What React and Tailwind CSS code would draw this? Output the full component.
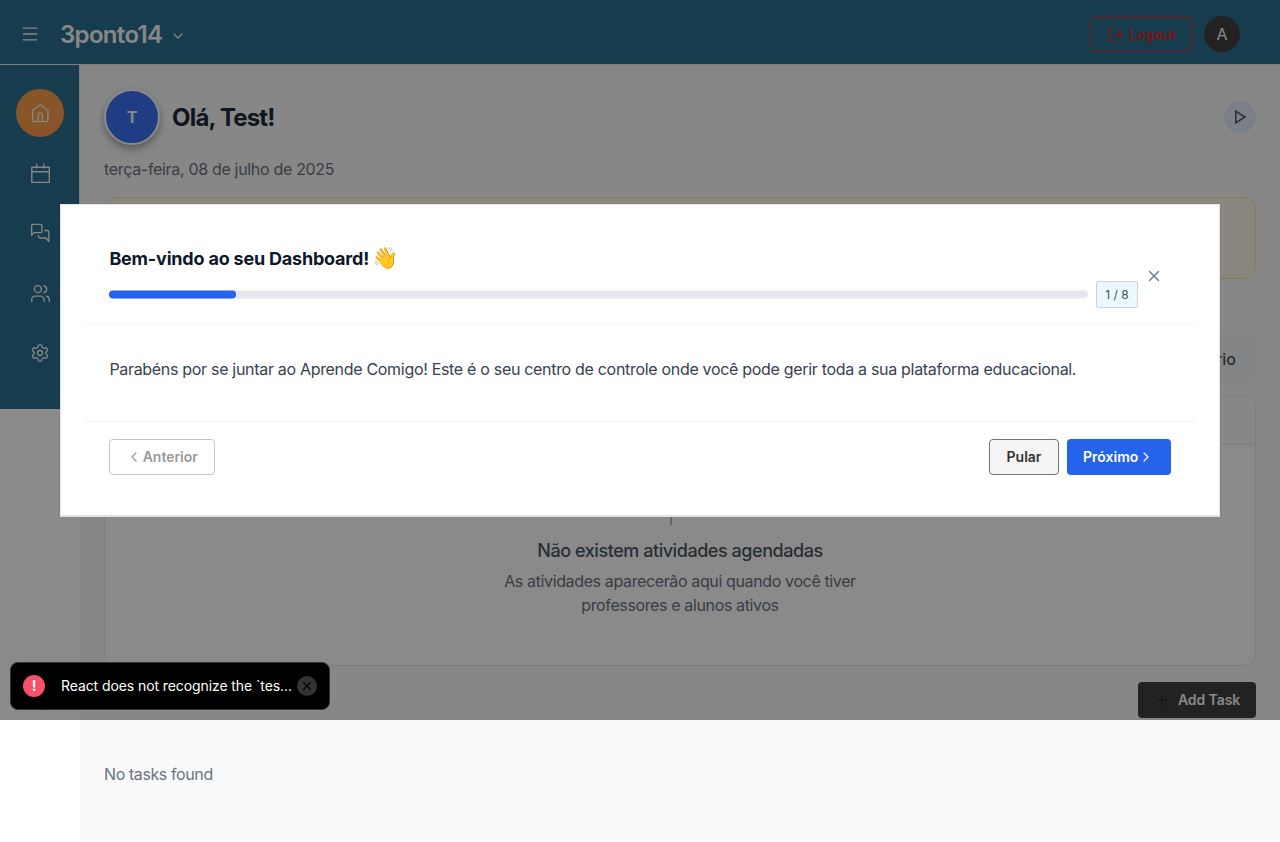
import React from 'react';
import { Users, Settings, Menu, ChevronDown, ChevronLeft, ChevronRight, LogOut, Plus, X } from 'lucide-react';

function HomeIcon() {
  return (
    <svg width="24" height="24" viewBox="0 0 24 24" fill="none" stroke="currentColor" strokeWidth="1.4">
      <path d="M4.6 9.2 12.2 3.7l7.7 5.5v9.8a1.6 1.6 0 0 1-1.6 1.6H6.2A1.6 1.6 0 0 1 4.6 19z" strokeLinejoin="round" />
      <path d="M10.2 20.4v-6.6a1.5 1.5 0 0 1 1.5-1.5h1.1a1.5 1.5 0 0 1 1.5 1.5v6.6" />
    </svg>
  );
}

function CalendarIcon() {
  return (
    <svg width="24" height="24" viewBox="0 0 24 24" fill="none" stroke="currentColor" strokeWidth="1.4">
      <path d="M3.8 6.2h17.5v15.2H3.8zM3.8 10.7h17.5M8.7 2.8v4.6M15.7 2.8v4.6" strokeLinejoin="round" />
    </svg>
  );
}

function MessagesIcon() {
  return (
    <svg width="24" height="24" viewBox="0 0 24 24" fill="none" stroke="currentColor" strokeWidth="1.4" strokeLinejoin="round">
      <path d="M3.6 14.2V4.8a1.4 1.4 0 0 1 1.4-1.4h7.6A1.4 1.4 0 0 1 14 4.8v5.4a1.4 1.4 0 0 1-1.4 1.4H6.2z" />
      <path d="M16.3 9.5h3.1a1.4 1.4 0 0 1 1.4 1.4v9.6l-2.9-3.5h-6a1.4 1.4 0 0 1-1.4-1.4v-1.5" />
    </svg>
  );
}

function Header() {
  return (
    <header className="flex h-[65px] shrink-0 items-center border-b border-[#e6e6e6] bg-[#2c6f90] pr-10 pl-5 pt-1">
      <Menu className="text-[#fafafa]" size={20} strokeWidth={1.6} />
      <h1 className="ml-5 pt-0.5 text-2xl font-semibold tracking-[-0.67px] text-[#fafafa]">3ponto14</h1>
      <ChevronDown className="ml-2 mt-[3px] text-[#fafafa]" size={16} strokeWidth={1.8} />
      <button className="ml-auto flex h-9 w-[101px] items-center justify-center gap-1 rounded border border-[#dc2626] pt-px text-sm font-semibold text-[#dc2626]">
        <LogOut size={17} strokeWidth={1.8} />
        Logout
      </button>
      <div className="ml-3 flex size-9 items-center justify-center rounded-full bg-[#404040] text-base text-[#fafafa]">A</div>
    </header>
  );
}

function Sidebar() {
  return (
    <div className="w-20 shrink-0 bg-white">
      <nav className="flex h-[344px] flex-col items-center gap-3 border-r border-[#e6e6e6] bg-[#2c6f90] pt-6 text-[#f5f5f5]">
        <div className="ml-px flex size-12 items-center justify-center rounded-full bg-[#fb9d4b]"><HomeIcon /></div>
        <div className="ml-px flex size-12 items-center justify-center"><CalendarIcon /></div>
        <div className="ml-px flex size-12 items-center justify-center"><MessagesIcon /></div>
        <div className="ml-px flex size-12 items-center justify-center"><Users size={21} strokeWidth={1.6} /></div>
        <div className="ml-px flex size-12 items-center justify-center"><Settings size={20} strokeWidth={1.6} /></div>
      </nav>
    </div>
  );
}

function Main() {
  return (
    <main className="flex min-w-0 grow flex-col bg-[#f9fafb] px-6 pt-6">
      <div className="flex h-14 items-center">
        <div className="flex size-14 items-center justify-center rounded-full border-2 border-white bg-[#3b71f3] text-base font-bold text-[#f9fafb] shadow-[0_4px_9px_rgba(0,0,0,0.35)]">T</div>
        <h2 className="ml-3 pt-0.5 text-2xl font-bold tracking-[-0.8px] text-[#1f2937]">Olá, Test!</h2>
        <div className="ml-auto flex size-8 items-center justify-center rounded-full bg-[#e3ecfb]">
          <svg width="16" height="16" viewBox="0 0 16 16" fill="none" stroke="#525252" strokeWidth="1.5">
            <path d="M3.8 2.2 13 8l-9.2 5.8z" />
          </svg>
        </div>
      </div>
      <p className="mt-3 h-6 text-base leading-6 tracking-[-0.32px] text-[#6b7280]">terça-feira, 08 de julho de 2025</p>
      <div className="mt-4 h-[82px] rounded-xl border border-[#fde68a] bg-[#fefaeb]" />
      <div className="mt-14 flex h-12 items-center justify-end rounded-xl bg-[#f3f4f6] pr-5 text-base font-medium text-[#4b5563]">Calendário</div>
      <section className="mt-3 flex h-[271px] flex-col rounded-xl border border-[#e5e7eb] bg-white">
        <div className="h-[49px] shrink-0 rounded-t-xl border-b border-[#e5e7eb] bg-[#f9fafb]" />
        <div className="flex flex-col items-center pt-8">
          <svg width="48" height="48" viewBox="0 0 48 48" fill="none" stroke="#b9bdc9" strokeWidth="2">
            <path d="M15 8v40M8 8h32v28H8z" />
          </svg>
          <h3 className="mt-3 text-lg leading-7 font-medium tracking-[-0.45px] text-[#4b5563]">Não existem atividades agendadas</h3>
          <p className="mt-1 w-[384px] text-center text-base leading-6 tracking-[-0.37px] text-[#6b7280]">As atividades aparecerão aqui quando você tiver <br />professores e alunos ativos</p>
        </div>
      </section>
      <button className="mt-4 flex h-9 w-[118px] shrink-0 items-center gap-2 self-end rounded bg-[#404040] pl-4 text-sm font-semibold tracking-[-0.1px] text-[#fafafa]">
        <Plus size={16} strokeWidth={1.6} className="text-[#222]" />
        Add Task
      </button>
      <p className="mt-11 text-base leading-6 tracking-[-0.4px] text-[#6b7280]">No tasks found</p>
    </main>
  );
}

function Tour() {
  return (
    <div className="absolute top-[204px] left-[60px] flex h-[313px] w-[1160.4px] flex-col border border-b-2 border-[#e2e2e2] bg-white px-[23.4px]">
      <div className="flex h-[120px] shrink-0 border-b border-[#f5f5f5] pl-[25px]">
        <div className="w-[1029px] pt-10">
          <h2 className="text-lg leading-[27px] font-bold tracking-[-0.2px] text-[#0f172a]">
            Bem-vindo ao seu Dashboard! <span className="-ml-px text-[21px] leading-[20px]">👋</span>
          </h2>
          <div className="mt-[9px] flex items-center gap-2">
            <div className="h-2 w-[978.5px] translate-y-[0.5px] rounded-full bg-[#e5e7eb]">
              <div className="h-2 w-[127px] rounded-full bg-[#2563eb]" />
            </div>
            <div className="flex h-[26.5px] w-[42px] items-center justify-center rounded-xs border border-[#cbd5e1] bg-[#ebf8ff] pt-0.5 text-xs text-[#414b5a]">1 / 8</div>
          </div>
        </div>
        <X className="mt-[62px] ml-[6.5px] text-[#64748b]" size={18} strokeWidth={1.8} />
      </div>
      <div className="flex h-[97px] shrink-0 items-center border-b border-[#f5f5f5] px-[25px] pb-2 text-base tracking-[-0.31px] text-[#374151]">
        Parabéns por se juntar ao Aprende Comigo! Este é o seu centro de controle onde você pode gerir toda a sua plataforma educacional.
      </div>
      <div className="flex gap-2 px-[25px] pt-[16.6px] text-sm font-semibold">
        <button className="mr-auto flex h-9 w-[105.5px] items-center rounded border border-[#c4c4c4] pl-4 text-[#999]">
          <ChevronLeft size={16} strokeWidth={1.8} />
          <span className="ml-[0.3px] tracking-[-0.03px]">Anterior</span>
        </button>
        <button className="h-9 w-[70px] rounded border border-[#757575] bg-[#f5f5f5] text-[#333]">Pular</button>
        <button className="flex h-9 w-[104px] items-center rounded bg-[#2563eb] pl-4 text-white">
          Próximo
          <ChevronRight size={16} strokeWidth={1.8} />
        </button>
      </div>
    </div>
  );
}

function Toast() {
  return (
    <div className="absolute top-[662px] left-[10px] flex h-12 w-80 items-center rounded-lg border border-[#333] bg-black pl-3">
      <div className="flex size-[22px] items-center justify-center rounded-full bg-[#f7516a] text-sm font-bold text-white">!</div>
      <span className="ml-4 w-[236px] text-sm tracking-[-0.09px] whitespace-nowrap text-white">React does not recognize the `tes...</span>
      <div className="flex size-5 items-center justify-center rounded-full bg-[#333]">
        <X className="text-black" size={14} strokeWidth={2} />
      </div>
    </div>
  );
}

export default function App() {
  return (
    <div className="relative h-[842px] w-[1280px] overflow-hidden bg-white font-['Inter',sans-serif]">
      <div className="flex h-[841px] flex-col">
        <Header />
        <div className="flex grow">
          <Sidebar />
          <Main />
        </div>
      </div>
      <div className="absolute inset-x-0 top-0 h-[720px] bg-black/46" />
      <Tour />
      <Toast />
    </div>
  );
}
